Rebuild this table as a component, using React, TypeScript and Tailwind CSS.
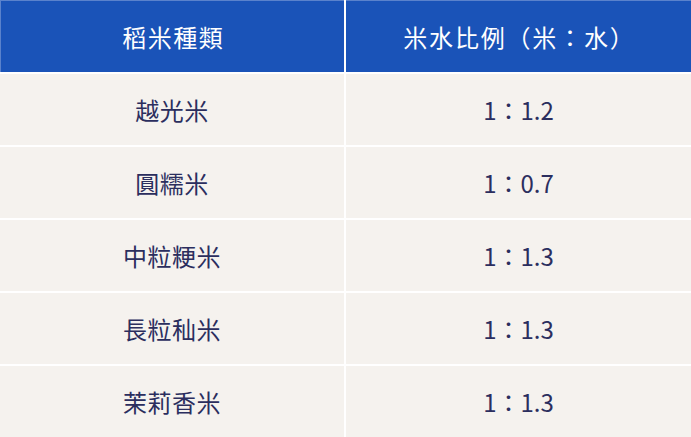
import React from "react";

const rows: [string, string][] = [
  ["越光米", "1：1.2"],
  ["圓糯米", "1：0.7"],
  ["中粒粳米", "1：1.3"],
  ["長粒秈米", "1：1.3"],
  ["茉莉香米", "1：1.3"],
];

export default function App() {
  return (
    <div
      className="w-[691px] h-[437px] bg-white grid grid-cols-[344px_345px] grid-rows-[72px_repeat(5,71px)] gap-[2px] text-[24px] leading-none"
      style={{ fontFamily: '"Noto Sans CJK TC", "Noto Sans", sans-serif' }}
    >
      <div className="bg-[#1a53b8] text-white flex items-center justify-center tracking-[1.5px] pl-[1.5px] border-t border-l border-[#5a82cc]">
        稻米種類
      </div>
      <div className="bg-[#1a53b8] text-white flex items-center justify-center tracking-[1.8px] pl-[1.8px] border-t border-[#5a82cc]">
        米水比例（米：水）
      </div>
      {rows.map(([a, b]) => (
        <React.Fragment key={a}>
          <div className="bg-[#f5f2ee] text-[#2b2e5e] flex items-center justify-center tracking-[0.5px]">
            {a}
          </div>
          <div className="bg-[#f5f2ee] text-[#2b2e5e] flex items-center justify-center">
            {b}
          </div>
        </React.Fragment>
      ))}
    </div>
  );
}
